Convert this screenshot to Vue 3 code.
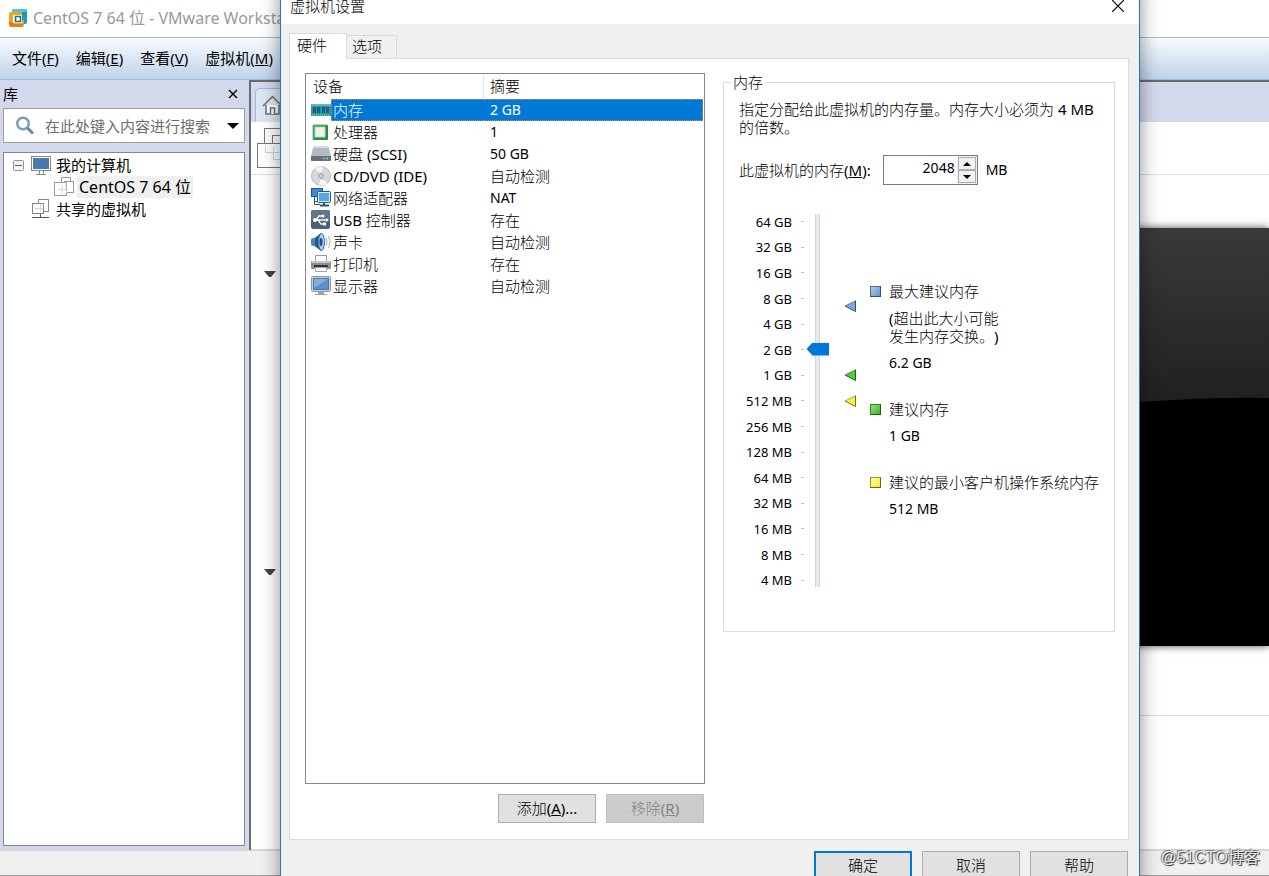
<script setup>
import { ref } from 'vue'

const menus = [
  { text: '文件', key: 'F' },
  { text: '编辑', key: 'E' },
  { text: '查看', key: 'V' },
  { text: '虚拟机', key: 'M' },
]

const devices = [
  { icon: 'memory', name: '内存', summary: '2 GB', latin: true, selected: true },
  { icon: 'cpu', name: '处理器', summary: '1', latin: true },
  { icon: 'disk', name: '硬盘 (SCSI)', summary: '50 GB', latin: true },
  { icon: 'cd', name: 'CD/DVD (IDE)', summary: '自动检测' },
  { icon: 'net', name: '网络适配器', summary: 'NAT', latin: true },
  { icon: 'usb', name: 'USB 控制器', summary: '存在' },
  { icon: 'sound', name: '声卡', summary: '自动检测' },
  { icon: 'printer', name: '打印机', summary: '存在' },
  { icon: 'display', name: '显示器', summary: '自动检测' },
]

const scale = ['64 GB', '32 GB', '16 GB', '8 GB', '4 GB', '2 GB', '1 GB', '512 MB', '256 MB', '128 MB', '64 MB', '32 MB', '16 MB', '8 MB', '4 MB']

const markers = [
  { id: 'max', fill: '#7fa6d6', stroke: '#2f4d78', step: 3.28 },
  { id: 'rec', fill: '#55c83c', stroke: '#1c5c14', step: 6 },
  { id: 'min', fill: '#f5f04a', stroke: '#77701a', step: 7 },
]

const hints = [
  { id: 'max', title: '最大建议内存', note: ['(超出此大小可能', '发生内存交换。)'], value: '6.2 GB' },
  { id: 'rec', title: '建议内存', value: '1 GB' },
  { id: 'min', title: '建议的最小客户机操作系统内存', value: '512 MB' },
]

const memory = ref('2048')
const level = ref(9)
const query = ref('')
</script>

<template>
  <div class="desktop">
    <header class="titlebar">
      <svg class="logo" viewBox="0 0 18 20" width="18" height="20">
        <path d="M5 1h10q3 0 3 3v10q0 2-2 2h-3V5H3V3q0-2 2-2z" fill="#1d9ab8" />
        <path d="M5 1h10q2 0 3 1l-2 2H3q0-3 2-3z" fill="#52c6dc" />
        <path d="M2 4h11v3H4v8h8v-3h3v5q0 2-2 2H3q-3 0-3-3V6q0-2 2-2z" fill="#f3a21d" />
        <path d="M0 14h4l1 2h9l-1 3H3q-3 0-3-3z" fill="#e07f16" />
        <rect x="4" y="7" width="9" height="8" fill="#fff" />
        <path d="M6.500 8.500h5v5h-5z" fill="#fff" stroke="#1b6f86" stroke-width="1.500" />
      </svg>
      <h1>CentOS 7 64 位 - VMware Workstation</h1>
    </header>

    <nav class="menubar">
      <button v-for="m in menus" :key="m.key" type="button">{{ m.text }}(<u>{{ m.key }}</u>)</button>
    </nav>

    <div class="body">
      <aside class="library">
        <div class="library-head">
          <h2>库</h2>
          <button type="button" aria-label="关闭">
            <svg viewBox="0 0 10 10" width="10" height="10"><path d="M1 1l8 8M9 1L1 9" stroke="#000" stroke-width="1.400" /></svg>
          </button>
        </div>
        <div class="search">
          <svg viewBox="0 0 20 20" width="20" height="20">
            <circle cx="8" cy="7.500" r="5.800" fill="#fff" stroke="#7f97bd" stroke-width="2.400" />
            <path d="M12.500 12.200l5.500 5.300" stroke="#6e84a8" stroke-width="3" />
          </svg>
          <input v-model="query" type="text" placeholder="在此处键入内容进行搜索" aria-label="搜索">
          <svg viewBox="0 0 12 6" width="12" height="6"><path d="M0 0h12L6 6z" fill="#000" /></svg>
        </div>
        <ul class="tree">
          <li class="root">
            <svg class="toggle" viewBox="0 0 11 11" width="11" height="11">
              <rect x=".5" y=".5" width="10" height="10" rx="1" fill="#f4f4f4" stroke="#909090" />
              <path d="M2 5.500h7" stroke="#3f5fb0" />
            </svg>
            <svg viewBox="0 0 20 20" width="20" height="20">
              <rect x=".5" y="1.500" width="19" height="14" fill="#fff" stroke="#888" />
              <rect x="2" y="3" width="16" height="11" fill="#4878b0" />
              <path d="M8.500 16v3M12.500 16v3M5 19.500h10" stroke="#888" fill="none" />
            </svg>
            <span>我的计算机</span>
          </li>
          <li class="child">
            <svg viewBox="0 0 20 20" width="20" height="20" fill="#fff" stroke="#999">
              <rect x="7.500" y=".5" width="9" height="12" />
              <rect x="10.500" y="4.500" width="9" height="11" />
              <rect x=".5" y="5.500" width="12" height="13" />
              <path d="M12 5v7.500H4M8 8v9M12.500 13v3" fill="none" stroke="#cdd5ea" />
            </svg>
            <span class="active">CentOS 7 64 位</span>
          </li>
          <li class="shared">
            <svg viewBox="0 0 20 20" width="20" height="20" fill="#fff" stroke="#888">
              <rect x="7.500" y=".5" width="10" height="12" />
              <rect x="1.500" y="4.500" width="11" height="10" />
              <path d="M9.500 5v7M4 9.500h8" stroke="#cdd5ea" />
              <path d="M9.500 15v3M1 18.500h17" stroke="#555" />
            </svg>
            <span>共享的虚拟机</span>
          </li>
        </ul>
      </aside>

      <main class="workspace">
        <div class="tabs">
          <div class="home-tab">
            <svg viewBox="0 0 20 20" width="20" height="20" fill="#fff" stroke="#6e6e6e" stroke-width="1.500">
              <path d="M4 10v9h13v-9" />
              <path d="M1 11L10.500 1.500 20 11" fill="none" />
              <path d="M8.500 19v-6h4v6" />
            </svg>
          </div>
        </div>
        <div class="toolbar">
          <svg viewBox="0 0 46 42" width="46" height="42" fill="#fff" stroke="#777">
            <rect x="7.500" y="1.500" width="32" height="27" />
            <rect x="15.500" y="8.500" width="26" height="20" />
            <rect x=".5" y="16.500" width="32" height="24" />
            <path d="M8.500 18v7.500h14M16.500 20v12.500H30" fill="none" stroke="#c6d0e8" />
          </svg>
        </div>
        <div class="content">
          <div class="sections">
            <svg viewBox="0 0 12 6" width="12" height="6"><path d="M0 0h12L7 6H5z" fill="#444" /></svg>
            <svg viewBox="0 0 12 6" width="12" height="6"><path d="M0 0h12L7 6H5z" fill="#444" /></svg>
          </div>
          <div class="preview">
            <svg class="screen" viewBox="0 0 400 418" preserveAspectRatio="none">
              <defs>
                <linearGradient id="glow" x1="0" y1="0" x2="0" y2="1">
                  <stop offset="0" stop-color="#3a3a3a" />
                  <stop offset=".42" stop-color="#202020" />
                </linearGradient>
              </defs>
              <rect width="400" height="418" fill="url(#glow)" />
              <path d="M0 230Q240 167 400 170V418H0z" fill="#000" />
            </svg>
            <hr>
          </div>
        </div>
      </main>
    </div>

    <footer class="statusbar"><span>@51CTO博客</span></footer>

    <section class="dialog" role="dialog" aria-labelledby="dialog-title">
      <div class="dialog-title">
        <h2 id="dialog-title">虚拟机设置</h2>
        <button type="button" aria-label="关闭">
          <svg viewBox="0 0 12 12" width="12" height="12"><path d="M0 0l12 12M12 0L0 12" stroke="#000" stroke-width="1.200" /></svg>
        </button>
      </div>

      <div class="dialog-body">
        <div class="dialog-tabs">
          <button type="button" class="current">硬件</button>
          <button type="button">选项</button>
        </div>

        <div class="panel">
          <div class="devices">
            <div class="device-list">
              <table>
                <thead>
                  <tr><th>设备</th><th>摘要</th></tr>
                </thead>
                <tbody>
                  <tr v-for="d in devices" :key="d.icon" :class="{ selected: d.selected }">
                    <td>
                      <div class="device">
                        <svg viewBox="0 0 20 20" width="20" height="20">
                          <g v-if="d.icon === 'memory'">
                            <path d="M0 4h20v12H0z" fill="#2b9a94" />
                            <path d="M0 4h20v2H0z" fill="#63bdb4" />
                            <path d="M2 7h3v6H2zM6 7h3v6H6zM11 7h3v6h-3zM15 7h3v6h-3z" fill="#225c94" />
                            <path d="M1 15h18" stroke="#a9d9c6" stroke-dasharray="1 1" />
                          </g>
                          <g v-else-if="d.icon === 'cpu'">
                            <rect x="2" y="3" width="15" height="15" rx="1" fill="#239043" />
                            <path d="M2 18V3h15" fill="none" stroke="#5fc274" />
                            <rect x="4" y="5" width="10" height="10" fill="#eef1ee" stroke="#b7d8be" />
                          </g>
                          <g v-else-if="d.icon === 'disk'">
                            <path d="M4 2h12q1 0 2 2l2 8H0l2-8q1-2 2-2z" fill="#b4bac3" />
                            <path d="M4 2h12l1 2H3z" fill="#d9dce0" />
                            <path d="M0 12h20v4q0 1-1 1H1q-1 0-1-1z" fill="#68707c" />
                            <path d="M12 14.500h2" stroke="#b5bcc5" /><path d="M15 14.500h2" stroke="#5ddb5a" stroke-width="2" />
                          </g>
                          <g v-else-if="d.icon === 'cd'">
                            <circle cx="10" cy="10" r="9.500" fill="#d5d9df" stroke="#b6bac2" />
                            <path d="M10 10L4 2.500A9 9 0 0 1 12 1zM10 10l6 7.500A9 9 0 0 1 8 19z" fill="#f5f6f8" />
                            <circle cx="10" cy="10" r="4" fill="#c6cbd5" />
                            <circle cx="10" cy="10" r="1.500" fill="#fff" stroke="#8f98a8" />
                          </g>
                          <g v-else-if="d.icon === 'net'">
                            <rect x=".5" y=".5" width="11" height="8" fill="#3f8ccf" stroke="#1f5a94" />
                            <path d="M3.500 9v7.500H9M3.500 13.500H7" fill="none" stroke="#33526f" />
                            <rect x="6.500" y="3.500" width="13" height="11" rx="1" fill="#dbe9f6" stroke="#1f5a94" />
                            <rect x="8" y="5" width="10" height="8" fill="#58a6ea" />
                            <path d="M13 15v2M9 17.500h9" stroke="#33526f" stroke-width="2" />
                          </g>
                          <g v-else-if="d.icon === 'usb'">
                            <rect width="19" height="19" rx="2" fill="#4d6079" />
                            <path d="M0 9V2q0-2 2-2h15q2 0 2 2v7z" fill="#62758d" />
                            <path d="M2 10h14M5 10l3-4h3M7 10l3 4h3" fill="none" stroke="#fff" stroke-width="1.300" />
                            <circle cx="4" cy="10" r="2" fill="#fff" /><circle cx="12" cy="6" r="1.500" fill="#fff" />
                            <path d="M12 12.500h3v3h-3zM15 8l3 2-3 2z" fill="#fff" />
                          </g>
                          <g v-else-if="d.icon === 'sound'">
                            <path d="M0 8q0-2 2-2h2l6-5q2 1 3 4t0 10q-1 3-3 4l-6-5H2q-2 0-2-2z" fill="#4588bf" />
                            <path d="M4 6l6-5q-3 9 0 18l-6-5z" fill="#27598b" />
                            <ellipse cx="10.500" cy="10" rx="3" ry="8.500" fill="#a9cdec" stroke="#3d77aa" />
                            <ellipse cx="10" cy="10" rx="1.500" ry="4" fill="#214e7c" />
                            <path d="M15 6q2 4 0 8M17.500 4q3 6 0 12" fill="none" stroke="#9eb8cf" />
                          </g>
                          <g v-else-if="d.icon === 'printer'">
                            <path d="M4.500 1.500h11v7h-11z" fill="#fff" stroke="#9b9b9b" />
                            <rect y="7" width="20" height="8" rx="1" fill="#8d8f98" />
                            <path d="M1 7h18v2H1z" fill="#c3c5cc" />
                            <path d="M3 11h14v2H3z" fill="#33353c" />
                            <path d="M4.500 13.500h11v4h-11z" fill="#fafafa" stroke="#a7a7a7" />
                          </g>
                          <g v-else>
                            <rect x=".5" y=".5" width="19" height="15" rx="1" fill="#c9d3de" stroke="#8795a5" />
                            <rect x="2.500" y="2.500" width="15" height="11" fill="#5d91c4" stroke="#4b78a3" />
                            <path d="M3 3h14L3 12z" fill="#86b0d8" />
                            <path d="M7 16h6v2h3v1H4v-1h3z" fill="#9aa6b3" />
                          </g>
                        </svg>
                        <span class="device-name">{{ d.name }}</span>
                      </div>
                    </td>
                    <td><div class="summary" :class="{ lat: d.latin }">{{ d.summary }}</div></td>
                  </tr>
                </tbody>
              </table>
            </div>
            <div class="list-actions">
              <button type="button" class="btn">添加(<u>A</u>)...</button>
              <button type="button" class="btn" disabled>移除(<u>R</u>)</button>
            </div>
          </div>

          <fieldset class="memory">
            <legend>内存</legend>
            <p>指定分配给此虚拟机的内存量。内存大小必须为 4 MB<br>的倍数。</p>
            <div class="amount">
              <label for="memory-size">此虚拟机的内存(<u>M</u>):</label>
              <div class="spinner">
                <input id="memory-size" v-model="memory" type="text">
                <div class="spin-buttons">
                  <button type="button" aria-label="增加"><svg viewBox="0 0 8 4" width="8" height="4"><path d="M0 4h8L4 0z" /></svg></button>
                  <button type="button" aria-label="减少"><svg viewBox="0 0 8 4" width="8" height="4"><path d="M0 0h8L4 4z" /></svg></button>
                </div>
              </div>
              <span class="lat">MB</span>
            </div>

            <div class="chart">
              <ol class="scale">
                <li v-for="s in scale" :key="s">{{ s }}</li>
              </ol>
              <input v-model="level" class="slider" type="range" min="0" max="14" aria-label="内存大小">
              <div class="markers">
                <svg v-for="m in markers" :key="m.id" viewBox="0 0 12 12" width="12" height="12" :style="{ top: (m.step + 0.5) / 15 * 100 + '%' }">
                  <path d="M11 1v10L1 6z" :fill="m.fill" />
                  <path d="M11 1L1 6" fill="none" :stroke="m.stroke" opacity=".6" />
                  <path d="M11.500 .5v11L1 6" fill="none" :stroke="m.stroke" />
                </svg>
              </div>
              <dl class="hints">
                <div v-for="h in hints" :key="h.id">
                  <dt><i :class="h.id"></i>{{ h.title }}</dt>
                  <dd v-if="h.note">{{ h.note[0] }}<br>{{ h.note[1] }}</dd>
                  <dd class="lat">{{ h.value }}</dd>
                </div>
              </dl>
            </div>
          </fieldset>
        </div>
      </div>

      <div class="dialog-actions">
        <button type="button" class="btn primary">确定</button>
        <button type="button" class="btn">取消</button>
        <button type="button" class="btn">帮助</button>
      </div>
    </section>
  </div>
</template>

<style>
body {
  margin: 0;
}
</style>

<style scoped>
* {
  box-sizing: border-box;
}
.desktop {
  position: relative;
  display: flex;
  flex-direction: column;
  min-height: 100vh;
  overflow: hidden;
  background: #fff;
  color: #000;
  font: 15px/18px "Noto Sans", "Noto Sans CJK SC", sans-serif;
  text-spacing-trim: space-all;
}
h1, h2, p, ul, ol, dl, dd {
  margin: 0;
  padding: 0;
  font-weight: 400;
  list-style: none;
}
button, input {
  font: inherit;
  color: inherit;
}
svg {
  display: block;
  flex: none;
}
.lat {
  font-size: 14px;
}
.titlebar {
  display: flex;
  align-items: center;
  gap: 6px;
  height: 38px;
  padding: 0 0 2px 9px;
  border-bottom: 1px solid #9dbbdb;
}
h1 {
  color: #999;
  font-size: 16px;
  white-space: nowrap;
}
.menubar {
  display: flex;
  align-items: center;
  gap: 17px;
  height: 42px;
  padding: 0 0 2px 12px;
  border-bottom: 1px solid #9dbbdb;
  background: linear-gradient(#f8fbfe, #bfd3eb);
}
.menubar button {
  padding: 0;
  border: 0;
  background: none;
}
.body {
  display: flex;
  flex: 1;
}
.library {
  display: flex;
  flex-direction: column;
  width: 249px;
  padding: 0 4px 4px 3px;
  background: #d3d9ed;
}
.library-head {
  display: flex;
  align-items: center;
  justify-content: space-between;
  height: 28px;
  padding-right: 7px;
}
h2 {
  font-size: 15px;
}
.library-head button {
  padding: 0;
  border: 0;
  background: none;
}
.search {
  display: flex;
  align-items: center;
  height: 35px;
  padding: 0 5px 0 11px;
  border: 1px solid #a0a0a0;
  background: #fff;
}
.search input {
  flex: 1;
  min-width: 0;
  margin-left: 8px;
  padding: 0 2px;
  border: 0;
  outline: 0;
  background: none;
}
.search input::placeholder {
  color: #6d6d6d;
}
.tree {
  flex: 1;
  margin-top: 9px;
  padding-top: 1px;
  border: 1px solid #828790;
  background: #fff;
}
.tree li {
  display: flex;
  align-items: center;
  gap: 3px;
  height: 22px;
  padding-left: 27px;
}
.tree li.root {
  padding-left: 9px;
}
.toggle {
  margin-right: 4px;
}
.tree li.child {
  padding-left: 50px;
}
.tree span {
  padding: 2px;
}
.tree .active {
  background: #f0f0f0;
  font-size: 16px;
}
.workspace {
  display: flex;
  flex: 1;
  flex-direction: column;
  min-width: 0;
  border-top: 2px solid #6b6b6b;
  border-left: 2px solid #6b6b6b;
}
.tabs {
  height: 40px;
  padding: 6px 4px 0;
  background: #d4d9ed;
}
.home-tab {
  width: 180px;
  height: 34px;
  padding: 6px;
  border: 1px solid #9bb9dc;
  border-bottom: 0;
  border-radius: 5px 5px 0 0;
  background: #dbe7f4;
}
.toolbar {
  height: 53px;
  padding: 5px 6px;
  border-bottom: 1px solid #cfe3f3;
}
.content {
  display: flex;
  flex: 1;
  border-bottom: 1px solid #d9d9d9;
}
.sections {
  display: flex;
  flex: 1;
  flex-direction: column;
  gap: 292px;
  padding: 96px 13px;
}
.preview {
  flex: 1;
  padding-top: 53px;
}
.screen {
  width: 100%;
  height: 418px;
  box-shadow: 0 0 8px rgba(0, 0, 0, 0.7);
}
.preview hr {
  margin: 69px 0 0;
  border: 0;
  border-top: 1px solid #dadada;
}
.statusbar {
  display: flex;
  align-items: center;
  justify-content: flex-end;
  height: 26px;
  padding: 0 9px 10px;
  border-top: 1px solid #d4d4d4;
  border-bottom: 1px solid #a0a0a0;
  background: #f0f0f0;
  color: #e8e8e8;
  font-family: "Liberation Sans", "Noto Sans CJK SC", sans-serif;
  font-size: 16px;
  text-shadow: 1px 1px 1px #222, -1px -1px 1px #777;
}
.dialog {
  position: absolute;
  inset: -13px 129px -14px 280px;
  display: flex;
  flex-direction: column;
  border: 1px solid #1979ca;
  background: #f0f0f0;
  box-shadow: 0 0 18px rgba(0, 0, 0, 0.45);
  font-family: "Noto Sans", "Noto Sans CJK SC Light", "Noto Sans CJK SC", sans-serif;
}
.dialog-title {
  display: flex;
  align-items: center;
  justify-content: space-between;
  height: 36px;
  padding: 0 15px 0 9px;
  background: #fff;
}
.dialog-title button {
  padding: 0;
  border: 0;
  background: none;
}
.dialog-body {
  display: flex;
  flex: 1;
  flex-direction: column;
  padding: 9px 10px 0 8px;
}
.dialog-tabs {
  display: flex;
  align-items: flex-end;
  height: 25px;
}
.dialog-tabs button {
  width: 50px;
  height: 23px;
  padding: 0 5px 2px;
  border: 1px solid #d9d9d9;
  border-width: 1px 1px 0 0;
  background: #f0f0f0;
  text-align: left;
}
.dialog-tabs .current {
  z-index: 1;
  width: 58px;
  height: 26px;
  margin-bottom: -1px;
  padding: 0 7px 4px;
  border-left-width: 1px;
  background: #fff;
}
.panel {
  display: grid;
  flex: 1;
  grid-template-columns: minmax(0, 400fr) minmax(0, 392fr);
  align-items: start;
  gap: 18px;
  padding: 14px 13px 16px 15px;
  border: 1px solid #dcdcdc;
  background: #fff;
}
.devices {
  display: flex;
  flex-direction: column;
  align-self: stretch;
}
.device-list {
  flex: 1;
  border: 1px solid #828790;
}
table {
  width: 100%;
  table-layout: fixed;
  border-spacing: 0;
}
th {
  height: 25px;
  padding: 0 7px 2px;
  font-weight: inherit;
  text-align: left;
}
th:first-child {
  width: 178px;
  border-right: 1px solid #e5e5e5;
}
th:last-child {
  padding-left: 6px;
}
td {
  padding: 0;
}
.device {
  display: flex;
  align-items: center;
  height: 22px;
  padding-left: 5px;
}
.device-name, .summary {
  flex: 1;
  height: 22px;
  border: 1px solid transparent;
  line-height: 20px;
}
.device-name {
  padding-left: 1px;
  border-right: 0;
}
.summary {
  margin-right: 1px;
  padding-left: 6px;
  border-left: 0;
}
.selected .device-name, .selected .summary {
  border-color: #e0883c;
  border-style: dotted;
  background: #0078d7;
  color: #fff;
}
.list-actions {
  display: flex;
  justify-content: flex-end;
  gap: 10px;
  margin-top: 10px;
  padding-right: 1px;
}
.btn {
  width: 98px;
  height: 29px;
  padding: 0 0 2px;
  border: 1px solid #adadad;
  background: #e1e1e1;
}
.btn:disabled {
  border-color: #bfbfbf;
  background: #ccc;
  color: #838383;
}
.btn.primary {
  border: 2px solid #0078d7;
}
.memory {
  min-width: 0;
  margin: 0;
  padding: 9px 15px 38px;
  border: 1px solid #dcdcdc;
}
.memory legend {
  margin-left: -8px;
  padding: 0 2px;
}
.memory p {
  white-space: nowrap;
}
.amount {
  display: flex;
  align-items: center;
  gap: 8px;
  margin-top: 19px;
}
.amount label {
  flex: none;
  margin-right: 4px;
  white-space: nowrap;
}
.spinner {
  display: flex;
  width: 95px;
  height: 30px;
  border: 1px solid #7a7a7a;
  background: #fff;
}
.spinner input {
  flex: 1;
  min-width: 0;
  padding: 0 2px 4px;
  border: 0;
  outline: 0;
  background: none;
  font-size: 14px;
  text-align: right;
}
.spin-buttons {
  display: flex;
  flex-direction: column;
  width: 20px;
  padding: 1px;
  background: #f0f0f0;
}
.spin-buttons button {
  display: flex;
  flex: 1;
  align-items: center;
  justify-content: center;
  padding: 0;
  border: 1px solid #acacac;
  background: #f0f0f0;
}
.chart {
  display: flex;
  align-items: flex-start;
  height: 384px;
  margin-top: 24px;
}
.scale {
  display: grid;
  grid-template-rows: repeat(15, 1fr);
  width: 65px;
  height: 100%;
  font-size: 13px;
}
.scale li {
  display: flex;
  align-items: center;
  justify-content: flex-end;
  gap: 9px;
  white-space: nowrap;
}
.scale li::after {
  width: 3px;
  height: 1px;
  background: #c0c0c0;
  content: "";
}
.slider {
  width: 24px;
  height: 373px;
  margin: 5px 0 0 2px;
  appearance: none;
  background: linear-gradient(#e7eaea, #e7eaea) center / 3px 100% no-repeat, linear-gradient(#d6d6d6, #d6d6d6) center / 5px 100% no-repeat;
  direction: rtl;
  writing-mode: vertical-lr;
}
.slider::-webkit-slider-thumb {
  width: 23px;
  height: 13px;
  appearance: none;
  background: #0078d7;
  clip-path: polygon(0 50%, 6px 0, 100% 0, 100% 100%, 6px 100%);
}
.markers {
  position: relative;
  width: 12px;
  height: 100%;
  margin-left: 14px;
}
.markers svg {
  position: absolute;
  left: 0;
  margin-top: -6px;
}
.hints {
  margin: 73px 0 0 14px;
}
.hints > div {
  margin-bottom: 28px;
}
.hints dt {
  display: flex;
  align-items: center;
  gap: 8px;
  white-space: nowrap;
}
.hints dd {
  margin: 9px 0 0 19px;
  white-space: nowrap;
}
.hints i {
  width: 11px;
  height: 11px;
  border: 1px solid;
}
.hints .max {
  border-color: #4c6c99 #2f4d78 #2f4d78 #4c6c99;
  background: linear-gradient(135deg, #b3cbe8, #6791c9);
}
.hints .rec {
  border-color: #2a8a22 #1c5c14 #1c5c14 #2a8a22;
  background: linear-gradient(135deg, #8fe07a, #3fb52a);
}
.hints .min {
  border-color: #99912c #6b6412 #6b6412 #99912c;
  background: linear-gradient(135deg, #fdfbb0, #f1ea2c);
}
.dialog-actions {
  display: flex;
  justify-content: flex-end;
  gap: 10px;
  height: 49px;
  padding: 11px 11px 0;
}
</style>
